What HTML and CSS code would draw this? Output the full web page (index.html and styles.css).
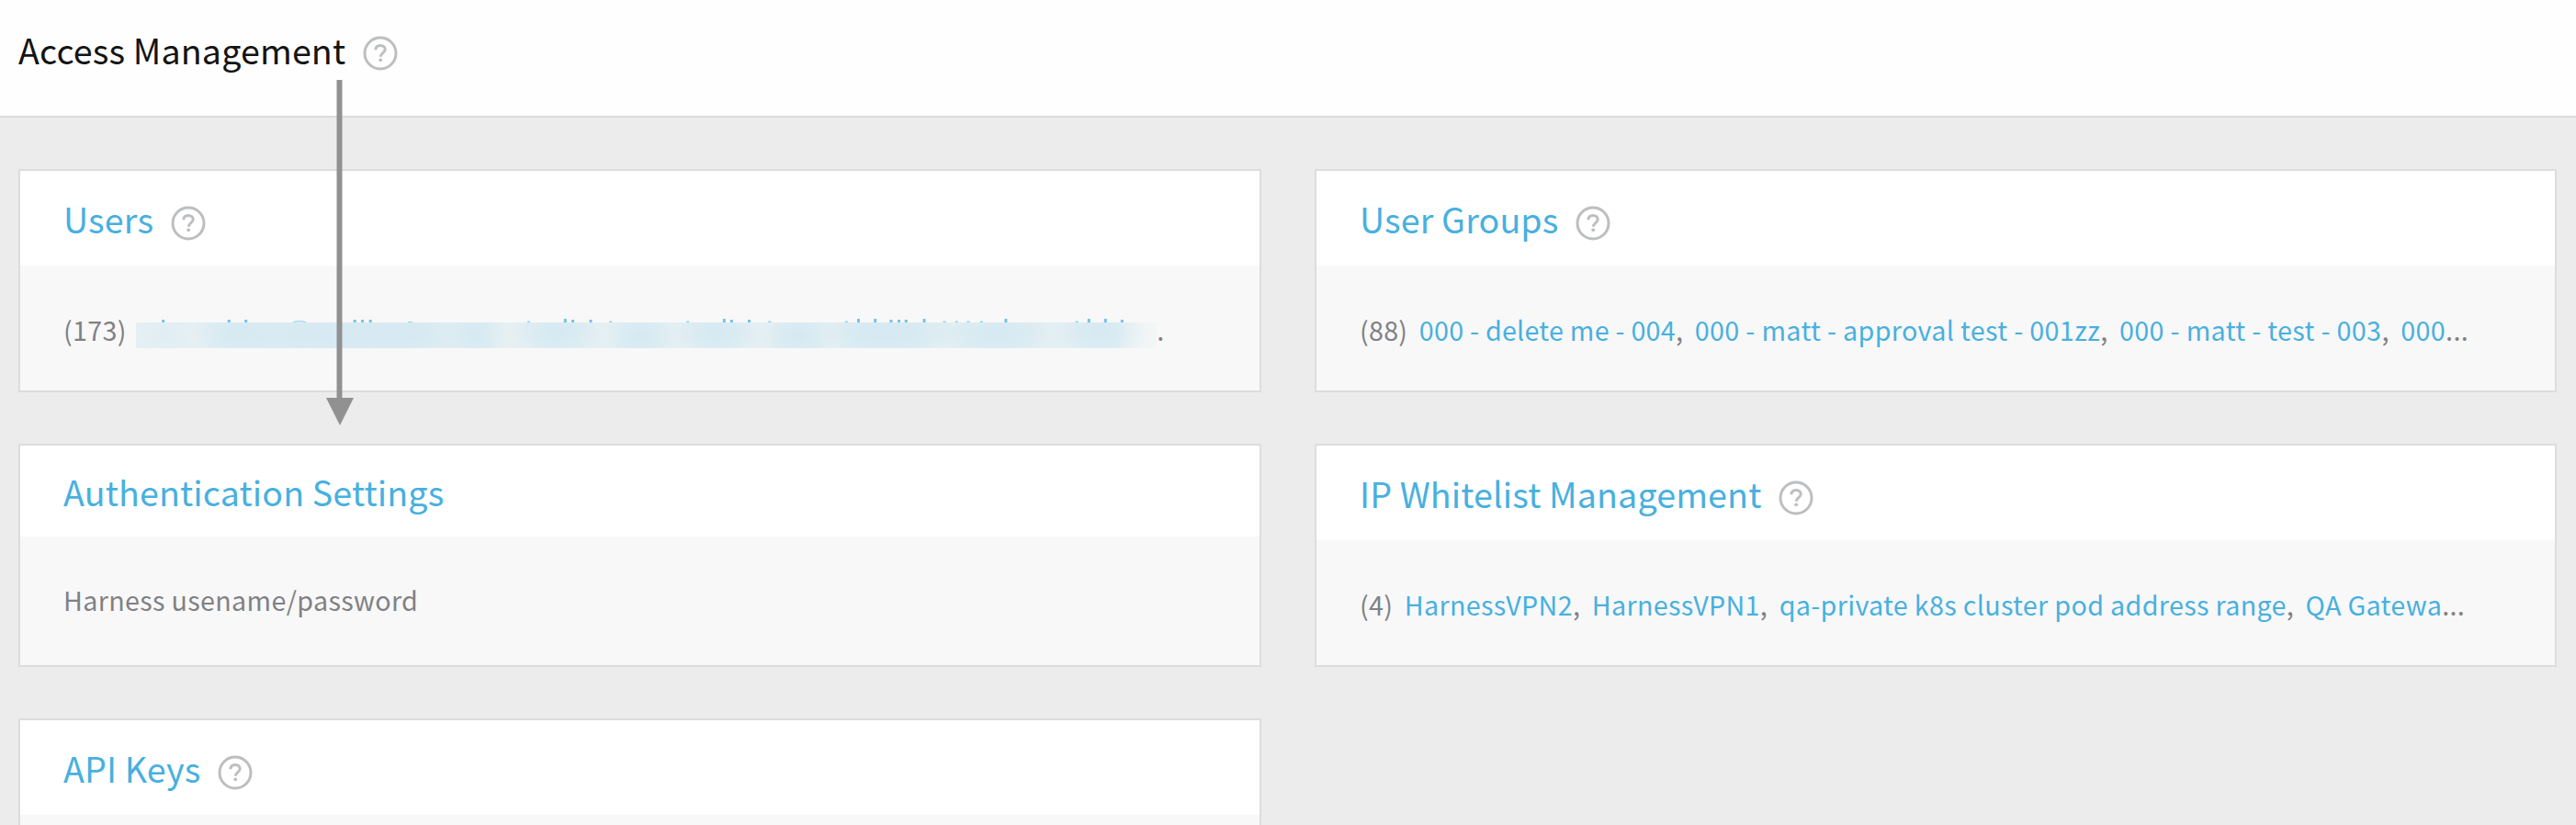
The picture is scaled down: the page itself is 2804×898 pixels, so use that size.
FILE: index.html
```html
<!DOCTYPE html>
<html lang="en">
<head>
<meta charset="utf-8">
<title>Access Management</title>
<link rel="stylesheet" href="styles.css">
</head>
<body>
<svg width="0" height="0" class="defs" aria-hidden="true">
  <symbol id="help" viewBox="0 0 38 38">
    <circle cx="19" cy="19" r="17" fill="none" stroke="#bcbec0" stroke-width="3"/>
    <path d="M13.700 15.200c.400-3.200 2.600-4.700 5.300-4.700 3.100 0 5.200 1.800 5.200 4.300 0 3.900-4.800 3.700-4.900 7.900" fill="none" stroke="#bcbec0" stroke-width="3"/>
    <circle cx="19.200" cy="26.300" r="1.900" fill="#bcbec0"/>
  </symbol>
</svg>
<header class="topbar">
  <h1 class="page-title">Access Management</h1>
  <svg class="help"><use href="#help"/></svg>
</header>
<main class="grid">
  <section class="card">
    <div class="card-head"><h2 class="card-title">Users</h2><svg class="help"><use href="#help"/></svg></div>
    <div class="card-body">
      <span class="count">(173)</span>
      <svg class="masked" viewBox="148 347 1112 32">
        <defs>
          <radialGradient id="smudge"><stop offset="0" stop-color="#d5e9f2"/><stop offset=".5" stop-color="#d5e9f2" stop-opacity=".65"/><stop offset="1" stop-color="#d5e9f2" stop-opacity="0"/></radialGradient>
          <linearGradient id="fade"><stop offset="0" stop-color="#f8f8f8" stop-opacity="0"/><stop offset="1" stop-color="#f8f8f8" stop-opacity=".8"/></linearGradient>
          <clipPath id="bar"><path d="M148 351h1112v28H148z"/></clipPath>
        </defs>
        <path d="M148 351h1112v28H148z" fill="#e6f0f3"/>
        <g fill="url(#smudge)" clip-path="url(#bar)">
          <ellipse cx="180" cy="363" rx="32" ry="26" opacity=".4"/>
          <ellipse cx="258" cy="363" rx="50" ry="34"/>
          <ellipse cx="330" cy="363" rx="90" ry="40"/>
          <ellipse cx="400" cy="364" rx="70" ry="40"/>
          <ellipse cx="450" cy="362" rx="60" ry="34"/>
          <ellipse cx="517" cy="363" rx="34" ry="34"/>
          <ellipse cx="607" cy="362" rx="52" ry="30"/>
          <ellipse cx="697" cy="365" rx="42" ry="32"/>
          <ellipse cx="780" cy="362" rx="52" ry="30"/>
          <ellipse cx="869" cy="365" rx="42" ry="32"/>
          <ellipse cx="945" cy="362" rx="52" ry="32"/>
          <ellipse cx="985" cy="362" rx="55" ry="32"/>
          <ellipse cx="1085" cy="363" rx="72" ry="32"/>
          <ellipse cx="1197" cy="361" rx="52" ry="32"/>
        </g>
        <path d="M1215 351h45v28h-45z" fill="url(#fade)"/>
        <g fill="none" stroke="#72c4e6" stroke-width="3">
          <path d="M177.700 348v3M249.300 348v3M267.700 348v3M386.200 348v3M394.600 348v3M403.200 348v3M615.300 347v4M623.500 348v3M643 348v3M788.300 347v4M796.300 348v3M815.500 348v3M934.500 347v4M952.700 347v4M970 348v3M978.500 348v3M986.300 348v3M1006 347v4M1094.900 347v4M1185.300 347v4M1203.300 347v4M1221.400 348v3"/>
          <path stroke-opacity=".75" d="M575.500 349.500v1.500M664.700 349.500v1.500M748.600 349.500v1.500M837.800 349.500v1.500M921.300 349.500v1.500M1028 349.500v1.500M1041.200 349.500v1.500M1054 349.500v1.500M1068.400 349.500v1.500M1172.200 349.500v1.500"/>
          <path stroke-width="1.200" stroke-opacity=".7" d="M319 350.800q7-2.400 14 0M444 350.500h5"/>
        </g>
      </svg>
      <span class="dot">.</span>
    </div>
  </section>
  <section class="card">
    <div class="card-head"><h2 class="card-title">User Groups</h2><svg class="help"><use href="#help"/></svg></div>
    <div class="card-body groups">
      <span class="count">(88)</span>
      <span class="item"><a>000 - delete me - 004</a>,</span>
      <span class="item wide"><a>000 - matt - approval test - 001zz</a>,</span>
      <span class="item wide"><a>000 - matt - test - 003</a>,</span>
      <span class="item wide"><a>000</a>...</span>
    </div>
  </section>
  <section class="card">
    <div class="card-head compact"><h2 class="card-title">Authentication Settings</h2></div>
    <div class="card-body plain"><span class="count">Harness usename/password</span></div>
  </section>
  <section class="card">
    <div class="card-head"><h2 class="card-title">IP Whitelist Management</h2><svg class="help"><use href="#help"/></svg></div>
    <div class="card-body">
      <span class="count">(4)</span>
      <span class="item"><a>HarnessVPN2</a>,</span>
      <span class="item"><a>HarnessVPN1</a>,</span>
      <span class="item"><a>qa-private k8s cluster pod address range</a>,</span>
      <span class="item"><a>QA Gatewa</a>...</span>
    </div>
  </section>
  <section class="card cut">
    <div class="card-head"><h2 class="card-title">API Keys</h2><svg class="help"><use href="#help"/></svg></div>
  </section>
</main>
<svg class="arrow" viewBox="0 0 32 378"><path d="M11.500 0h6v346h12.500L15 376 0 346h11.500z" fill="#919191"/></svg>
</body>
</html>
```
FILE: styles.css
```css
* { box-sizing: border-box; }
body {
  margin: 0;
  position: relative;
  width: 2804px;
  height: 898px;
  overflow: hidden;
  background: #ececec;
  font-family: "Noto Sans CJK SC", "Noto Sans", sans-serif;
  color: #808184;
}
.defs { position: absolute; }
.topbar {
  display: flex;
  align-items: center;
  height: 128px;
  padding: 0 20px 18px;
  background: #fefefe;
  border-bottom: 2px solid #dcdcdc;
}
.page-title, .card-title { margin: 0; font-size: 37.6px; font-weight: 400; line-height: 60px; white-space: nowrap; letter-spacing: 0.15px; }
.page-title { color: #141414; }
.card-title { color: #48b0df; }
.help { width: 38px; height: 38px; margin: 10px 0 0 18.5px; flex: none; }
.topbar .help { margin-top: 7px; }
.grid {
  display: grid;
  grid-template-columns: 1353px 1352px;
  grid-template-rows: 243px 243px 116px;
  gap: 56px 58px;
  padding: 56px 0 0 20px;
}
.card { display: flex; flex-direction: column; background: #f8f8f8; border: 2px solid #dcdddd; }
.cut { border-bottom: 0; }
.card-head { display: flex; align-items: center; height: 103px; padding: 0 47px; background: #fff; }
.compact { height: 99px; }
.card-body {
  flex: 1;
  display: flex;
  align-items: center;
  gap: 12.5px;
  padding: 3px 47px 0;
  font-size: 28.65px;
  line-height: 48px;
  letter-spacing: 0.36px;
  white-space: nowrap;
}
.groups { letter-spacing: 0.28px; }
.wide { letter-spacing: 0.38px; }
.plain { padding: 0 47px 2px; }
.card-body a { color: #48b0df; }
.masked { width: 1112px; height: 32px; margin: 9px 0 0 -2px; flex: none; }
.dot { margin-left: -13.5px; }
.arrow { position: absolute; left: 355px; top: 87px; width: 32px; height: 378px; }
```
